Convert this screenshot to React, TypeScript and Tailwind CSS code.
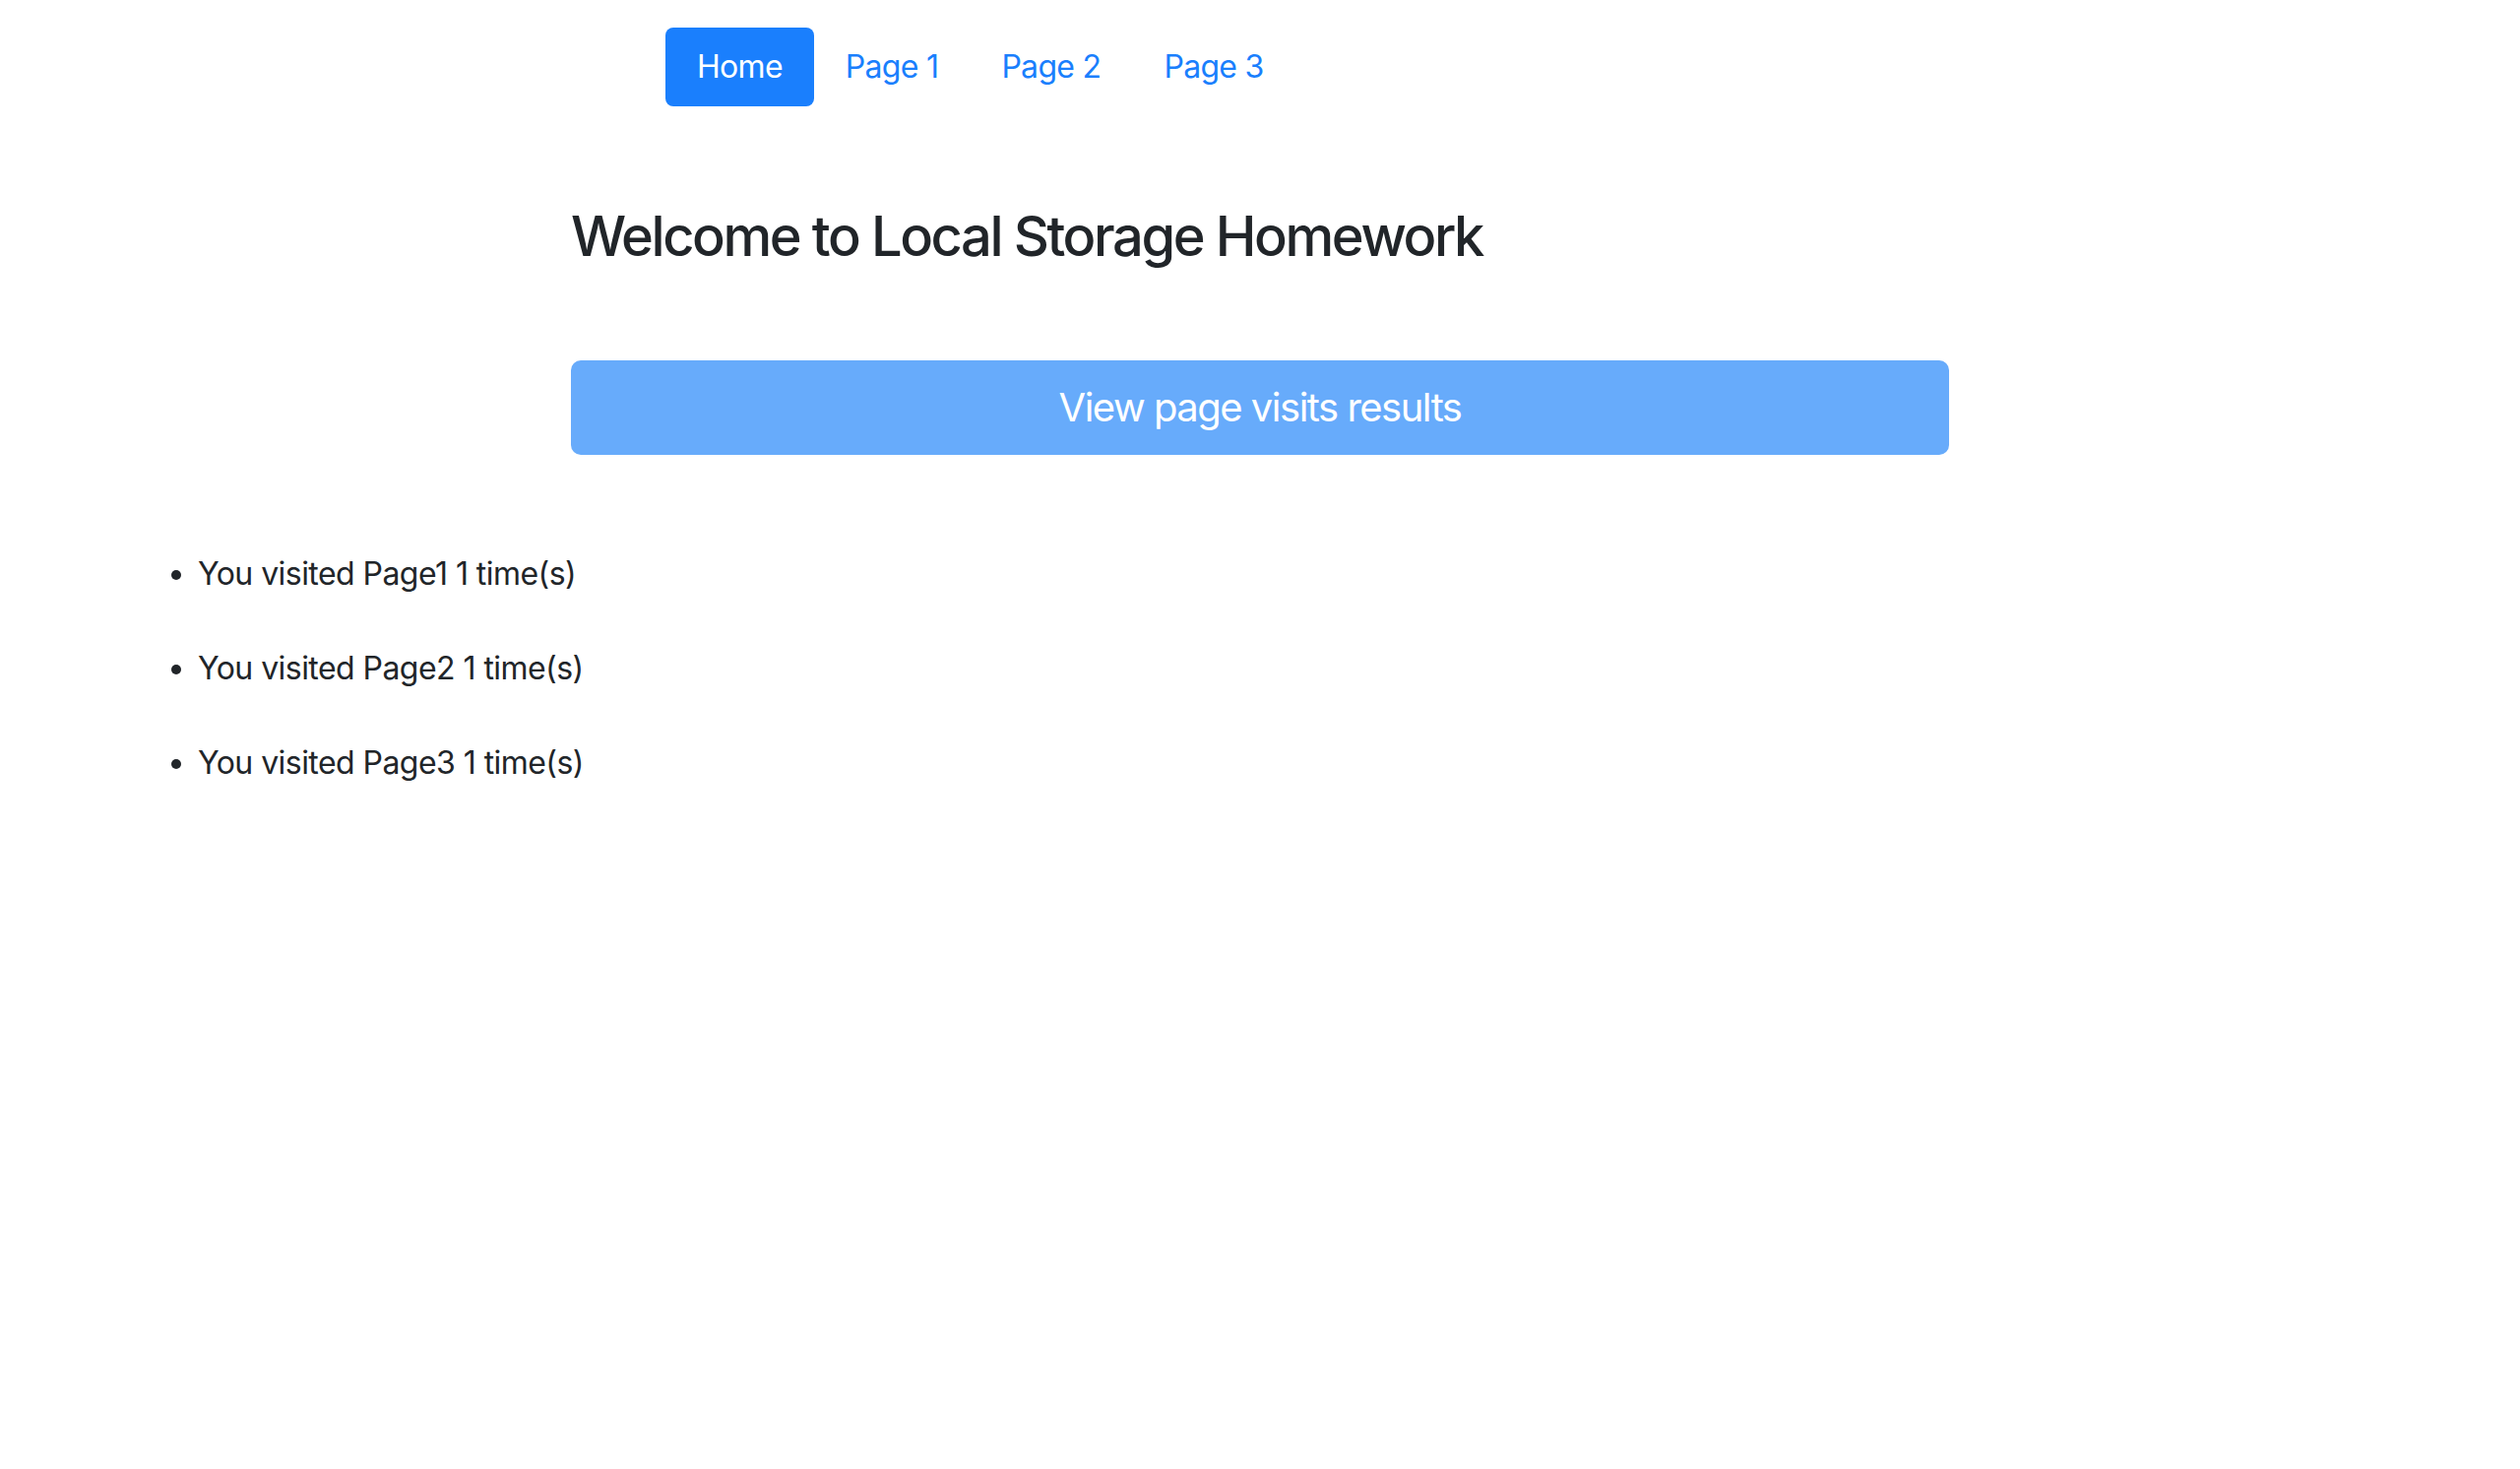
import React from "react";

const navLinks = ["Home", "Page 1", "Page 2", "Page 3"];

const visits = [
  { page: "Page1", count: 1 },
  { page: "Page2", count: 1 },
  { page: "Page3", count: 1 },
];

const App: React.FC = () => {
  return (
    <div
      className="min-h-screen bg-white text-[#212529]"
      style={{ fontFamily: "Inter, 'Noto Sans', sans-serif" }}
    >
      {/* Nav pills */}
      <nav className="pt-[28px] pl-[676px]">
        <ul className="flex items-center">
          {navLinks.map((link, index) => (
            <li key={link}>
              <a
                href="#"
                className={
                  index === 0
                    ? "block h-[80px] px-[32px] leading-[80px] rounded-[8px] bg-[#1a7ffd] text-white text-[32px] tracking-[-0.7px]"
                    : "block h-[80px] px-[32px] leading-[80px] text-[#1a7ffd] text-[32px] tracking-[-0.7px]"
                }
              >
                {link}
              </a>
            </li>
          ))}
        </ul>
      </nav>

      {/* Main content */}
      <main className="w-[1400px] mx-auto mt-[94px]">
        <h2 className="text-[56px] font-medium leading-[76px] tracking-[-2.4px]">
          Welcome to Local Storage Homework
        </h2>
        <button
          disabled
          className="mt-[88px] w-full h-[96px] rounded-[10px] bg-[#67abfb] text-white text-[40px] tracking-[-1.5px]"
        >
          View page visits results
        </button>
      </main>

      {/* Visit results */}
      <ul className="mt-[97px] pl-[201px] list-disc flex flex-col gap-[48px] text-[32px] leading-[48px] tracking-[-0.55px]">
        {visits.map((visit) => (
          <li key={visit.page}>
            You visited {visit.page} {visit.count} time(s)
          </li>
        ))}
      </ul>
    </div>
  );
};

export default App;
